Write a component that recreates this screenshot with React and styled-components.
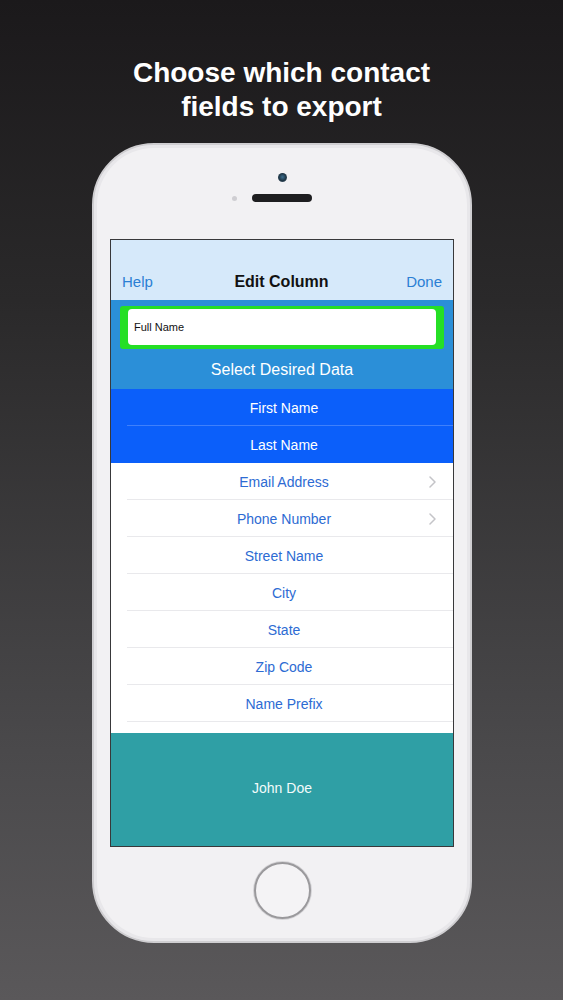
import styled, { createGlobalStyle } from "styled-components";

const GlobalStyle = createGlobalStyle`
  html, body {
    margin: 0;
    padding: 0;
  }
  body {
    font-family: "Liberation Sans", Arial, sans-serif;
  }
`;

// page + headline
const Page = styled.div`
  width: 563px;
  height: 1000px;
  overflow: hidden;
  background: linear-gradient(180deg, #1b191b 0%, #2a292a 30%, #4a494b 75%, #5a585a 100%);
  display: flex;
  flex-direction: column;
  align-items: center;
`;

const Headline = styled.h1`
  margin: 56px 0 0;
  color: #ffffff;
  font-size: 28px;
  line-height: 34px;
  font-weight: 700;
  text-align: center;
`;

// the phone body
const Phone = styled.div`
  box-sizing: border-box;
  margin-top: 19px;
  margin-left: 1px;
  width: 380px;
  height: 800px;
  border-radius: 62px;
  background: #f2f1f3;
  border: 2px solid #cfced1;
  box-shadow: inset 0 0 0 3px #e8e7ea;
  display: flex;
  flex-direction: column;
  align-items: center;
`;

const TopBezel = styled.div`
  height: 94px;
  width: 100%;
  display: flex;
  flex-direction: column;
  align-items: center;
  padding-top: 28px;
  box-sizing: border-box;
`;

const Camera = styled.div`
  width: 9px;
  height: 9px;
  border-radius: 50%;
  background: radial-gradient(circle at 50% 45%, #3d6e8e 0%, #1d3444 55%, #6b7a85 100%);
`;

const SpeakerRow = styled.div`
  margin-top: 12px;
  width: 100%;
  display: flex;
  justify-content: center;
  align-items: center;
  position: relative;
`;

const Speaker = styled.div`
  width: 60px;
  height: 8px;
  border-radius: 4px;
  background: #1e1e20;
`;

const Sensor = styled.div`
  position: absolute;
  left: 138px;
  width: 5px;
  height: 5px;
  border-radius: 50%;
  background: #cfced2;
`;

const Screen = styled.div`
  box-sizing: border-box;
  width: 344px;
  height: 608px;
  border: 1px solid #38383a;
  background: #ffffff;
  display: flex;
  flex-direction: column;
  overflow: hidden;
`;

const BottomBezel = styled.div`
  flex: 1;
  width: 100%;
  display: flex;
  justify-content: center;
  padding-top: 15px;
  box-sizing: border-box;
`;

const HomeButton = styled.div`
  box-sizing: border-box;
  width: 57px;
  height: 57px;
  border-radius: 50%;
  border: 2px solid #9a999c;
  background: #f4f3f5;
  box-shadow: 0 0 0 1px #d6d5d8;
`;

// app UI
const NavBar = styled.div`
  height: 60px;
  background: #d6e9fa;
  display: flex;
  align-items: flex-end;
  justify-content: space-between;
  padding: 0 11px 8px 11px;
  box-sizing: border-box;
  line-height: 20px;
`;

const NavButton = styled.span`
  color: #2b7fd4;
  font-size: 15px;
`;

const NavTitle = styled.span`
  color: #111;
  font-size: 16px;
  font-weight: 700;
  padding-left: 4px;
`;

const Header = styled.div`
  background: #2b8fd8;
  display: flex;
  flex-direction: column;
  padding-top: 6px;
`;

const GreenFrame = styled.div`
  margin: 0 9px;
  padding: 3px 8px 4px;
  background: #25df25;
  border-radius: 3px;
`;

const NameInput = styled.div`
  height: 36px;
  background: #ffffff;
  border-radius: 4px;
  display: flex;
  align-items: center;
  padding-left: 6px;
  font-size: 11px;
  color: #111;
`;

const SectionTitle = styled.div`
  height: 40px;
  display: flex;
  align-items: center;
  justify-content: center;
  color: #ffffff;
  font-size: 16px;
  padding-top: 1px;
  box-sizing: border-box;
`;

const List = styled.div`
  display: flex;
  flex-direction: column;
`;

const Row = styled.div`
  height: 37px;
  position: relative;
  display: flex;
  align-items: center;
  justify-content: center;
  padding-left: 4px;
  font-size: 14px;
  background: ${(p) => (p.$selected ? "#0b5ffa" : "#ffffff")};
  color: ${(p) => (p.$selected ? "#ffffff" : "#2d6bd3")};

  &::after {
    content: "";
    position: absolute;
    left: 16px;
    right: 0;
    bottom: 0;
    height: 1px;
    background: ${(p) => (p.$selected ? "#3f80fb" : "#e9e9ec")};
    display: ${(p) => (p.$last ? "none" : "block")};
  }
`;

const Chevron = styled.svg`
  position: absolute;
  right: 17px;
  top: 50%;
  margin-top: -6px;
`;

const Spacer = styled.div`
  height: 11px;
  background: #ffffff;
`;

const Preview = styled.div`
  flex: 1;
  background: #2f9fa5;
  display: flex;
  align-items: center;
  justify-content: center;
  padding-bottom: 4px;
  color: #f2fbfb;
  font-size: 14px;
`;

const fields = [
  { label: "First Name", selected: true },
  { label: "Last Name", selected: true, last: true },
  { label: "Email Address", more: true },
  { label: "Phone Number", more: true },
  { label: "Street Name" },
  { label: "City" },
  { label: "State" },
  { label: "Zip Code" },
  { label: "Name Prefix" },
];

export default function App() {
  return (
    <>
      <GlobalStyle />
      <Page>
        <Headline>
          Choose which contact
          <br />
          fields to export
        </Headline>
        <Phone>
          <TopBezel>
            <Camera />
            <SpeakerRow>
              <Sensor />
              <Speaker />
            </SpeakerRow>
          </TopBezel>
          <Screen>
            <NavBar>
              <NavButton>Help</NavButton>
              <NavTitle>Edit Column</NavTitle>
              <NavButton>Done</NavButton>
            </NavBar>
            <Header>
              <GreenFrame>
                <NameInput>Full Name</NameInput>
              </GreenFrame>
              <SectionTitle>Select Desired Data</SectionTitle>
            </Header>
            <List>
              {fields.map((f) => (
                <Row key={f.label} $selected={f.selected} $last={f.last}>
                  {f.label}
                  {f.more && (
                    <Chevron width="7" height="12" viewBox="0 0 7 12">
                      <path d="M1 1l5 5-5 5" fill="none" stroke="#c4c4c8" strokeWidth="1.5" strokeLinecap="round" strokeLinejoin="round" />
                    </Chevron>
                  )}
                </Row>
              ))}
            </List>
            <Spacer />
            <Preview>John Doe</Preview>
          </Screen>
          <BottomBezel>
            <HomeButton />
          </BottomBezel>
        </Phone>
      </Page>
    </>
  );
}
